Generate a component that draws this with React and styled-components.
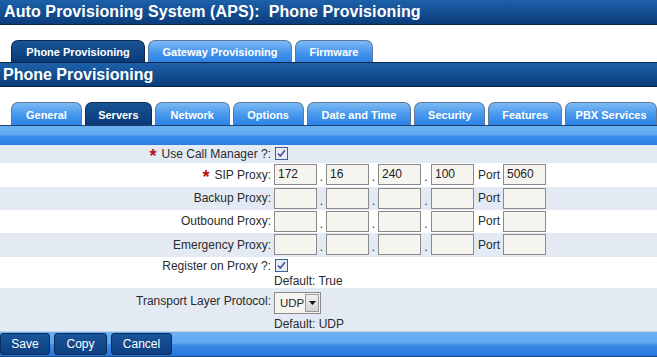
import React from 'react'
import styled, { createGlobalStyle } from 'styled-components'

const GlobalStyle = createGlobalStyle`
  body {
    margin: 0;
    background: #ffffff;
    font-family: "Liberation Sans", Arial, sans-serif;
  }
`

const Page = styled.div`
  width: 657px;
  height: 357px;
  overflow: hidden;
  display: flex;
  flex-direction: column;
`

const TitleBar = styled.div`
  height: 24px;
  border-bottom: 1px solid #0a2548;
  background: linear-gradient(#1c61aa, #0c3c7a);
  color: #ffffff;
  font-weight: bold;
  font-size: 16px;
  letter-spacing: 0.1px;
  line-height: 24px;
  padding-left: 4px;
  white-space: pre;
`

const TabStrip = styled.div`
  display: flex;
  align-items: flex-end;
  gap: 3px;
  padding-left: 11px;
  padding-top: ${(p) => p.$top}px;
  height: ${(p) => p.$height}px;
`

const Tab = styled.div`
  width: ${(p) => p.$width}px;
  height: ${(p) => p.$height}px;
  box-sizing: border-box;
  border: 1px solid ${(p) => (p.$active ? '#0a2a52' : '#5d7898')};
  border-bottom: none;
  border-radius: 7px 7px 0 0;
  background: ${(p) =>
    p.$active ? 'linear-gradient(#175496, #0b3a77)' : 'linear-gradient(#7dbaf5, #4596ec 55%, #2c83e6)'};
  color: #ffffff;
  font-weight: bold;
  font-size: 11px;
  display: flex;
  align-items: center;
  justify-content: center;
  padding-top: 1px;
  white-space: nowrap;
  overflow: hidden;
`

const SectionHeader = styled.div`
  height: 23px;
  border-top: 1px solid #0a2548;
  border-bottom: 1px solid #0a2548;
  background: linear-gradient(#1c61aa, #0c3c7a);
  color: #ffffff;
  font-weight: bold;
  font-size: 16px;
  line-height: 23px;
  padding-left: 3px;
`

const GlossBar = styled.div`
  height: ${(p) => p.$height}px;
  border-top: 1px solid #1d426e;
  background: linear-gradient(#6cb2f3 0%, #5ea8f0 48%, #3a8ce8 52%, #2a7fe2 100%);
`

const Form = styled.div`
  display: flex;
  flex-direction: column;
`

const Row = styled.div`
  display: grid;
  grid-template-columns: 271px 1fr;
  column-gap: 3px;
  height: ${(p) => p.$height}px;
  align-items: ${(p) => (p.$top ? 'start' : 'center')};
  background: ${(p) => (p.$shade ? '#e4eaf3' : '#ffffff')};
  font-size: 12px;
  color: #2b2b2b;
`

const Label = styled.div`
  text-align: right;
  white-space: nowrap;
  padding-top: ${(p) => p.$pad || 0}px;
`

const Star = styled.span`
  color: #b01818;
  font-weight: bold;
  font-size: 18px;
  line-height: 10px;
  position: relative;
  top: 4px;
  margin-right: 5px;
`

const Field = styled.div`
  display: flex;
  align-items: center;
  padding-top: ${(p) => p.$pad || 0}px;
`

const Stack = styled.div`
  display: flex;
  flex-direction: column;
  align-items: flex-start;
  gap: ${(p) => p.$gap}px;
  padding-top: ${(p) => p.$pad || 0}px;
`

const Input = styled.div`
  width: 43px;
  height: 21px;
  box-sizing: border-box;
  border: 1px solid #8a8a8a;
  background: #f5f4ef;
  font-size: 12px;
  line-height: 19px;
  padding-left: 3px;
  color: #222;
`

const Dot = styled.span`
  width: ${(p) => p.$w}px;
  text-align: center;
  font-size: 12px;
  padding-top: 5px;
`

const PortLabel = styled.span`
  padding: 0 3px 0 4px;
  font-size: 12px;
`

const Box = styled.span`
  display: block;
  width: 13px;
  height: 13px;
  margin-left: 1px;
`

const Select = styled.div`
  width: 47px;
  height: 22px;
  box-sizing: border-box;
  border: 1px solid #8a8a8a;
  background: #f5f4ef;
  display: flex;
  align-items: center;
  justify-content: space-between;
  padding: 1px;
  font-size: 11.5px;
`

const SelectText = styled.span`
  padding-left: 4px;
`

const Arrow = styled.span`
  width: 14px;
  height: 18px;
  box-sizing: border-box;
  border: 1px solid #9a9a9a;
  background: linear-gradient(#f0f0f0, #d4d4d4);
  display: flex;
  align-items: center;
  justify-content: center;
`

const Hint = styled.div`
  font-size: 12px;
  color: #2b2b2b;
`

const ButtonBar = styled.div`
  height: 25px;
  border-top: 1px solid #c4d4e6;
  background: linear-gradient(#6cb2f3 0%, #5ea8f0 45%, #3a8ce8 55%, #2577e0 100%);
  border-bottom: 1px solid #1a4a80;
  display: flex;
  gap: 4px;
  align-items: center;
`

const Button = styled.div`
  width: ${(p) => p.$width}px;
  height: 22px;
  box-sizing: border-box;
  border: 1px solid #0a2d5a;
  border-radius: 3px;
  background: linear-gradient(#1a5599, #0c3f80);
  color: #ffffff;
  font-size: 12px;
  display: flex;
  align-items: center;
  justify-content: center;
`

const CheckBox = () => (
  <Box>
    <svg width="13" height="13" viewBox="0 0 13 13">
      <rect x="0.5" y="0.5" width="12" height="12" fill="#e9ebf3" stroke="#3a6390" />
      <path d="M3 6.5 L5.3 9 L10 3.2" fill="none" stroke="#4a4fa6" strokeWidth="1.6" />
    </svg>
  </Box>
)

const IpField = ({ values = ['', '', '', ''], port = '' }) => (
  <Field>
    <Input>{values[0]}</Input>
    <Dot $w={9}>.</Dot>
    <Input>{values[1]}</Input>
    <Dot $w={9}>.</Dot>
    <Input>{values[2]}</Input>
    <Dot $w={10}>.</Dot>
    <Input>{values[3]}</Input>
    <PortLabel>Port</PortLabel>
    <Input>{port}</Input>
  </Field>
)

const topTabs = [
  { label: 'Phone Provisioning', width: 134, active: true },
  { label: 'Gateway Provisioning', width: 144 },
  { label: 'Firmware', width: 78 }
]

const subTabs = [
  { label: 'General', width: 71 },
  { label: 'Servers', width: 67, active: true },
  { label: 'Network', width: 75 },
  { label: 'Options', width: 71 },
  { label: 'Date and Time', width: 105 },
  { label: 'Security', width: 71 },
  { label: 'Features', width: 74 },
  { label: 'PBX Services', width: 92 }
]

const App = () => (
  <Page>
    <GlobalStyle />
    <TitleBar>Auto Provisioning System (APS):  Phone Provisioning</TitleBar>
    <TabStrip $top={15} $height={22}>
      {topTabs.map((t) => (
        <Tab key={t.label} $width={t.width} $height={22} $active={t.active}>
          {t.label}
        </Tab>
      ))}
    </TabStrip>
    <SectionHeader>Phone Provisioning</SectionHeader>
    <TabStrip $top={15} $height={23}>
      {subTabs.map((t) => (
        <Tab key={t.label} $width={t.width} $height={23} $active={t.active}>
          {t.label}
        </Tab>
      ))}
    </TabStrip>
    <GlossBar $height={19} />
    <Form>
      <Row $shade $height={18}>
        <Label>
          <Star>*</Star>Use Call Manager ?:
        </Label>
        <CheckBox />
      </Row>
      <Row $height={24}>
        <Label>
          <Star>*</Star>SIP Proxy:
        </Label>
        <IpField values={['172', '16', '240', '100']} port="5060" />
      </Row>
      <Row $shade $height={23}>
        <Label>Backup Proxy:</Label>
        <IpField />
      </Row>
      <Row $height={23}>
        <Label>Outbound Proxy:</Label>
        <IpField />
      </Row>
      <Row $shade $height={24}>
        <Label>Emergency Proxy:</Label>
        <IpField />
      </Row>
      <Row $top $height={31}>
        <Label $pad={2}>Register on Proxy ?:</Label>
        <Stack $gap={2} $pad={2}>
          <CheckBox />
          <Hint>Default: True</Hint>
        </Stack>
      </Row>
      <Row $shade $top $height={43}>
        <Label $pad={6}>Transport Layer Protocol:</Label>
        <Stack $gap={3} $pad={4}>
          <Select>
            <SelectText>UDP</SelectText>
            <Arrow>
              <svg width="7" height="4" viewBox="0 0 7 4">
                <path d="M0 0 H7 L3.5 4 Z" fill="#111" />
              </svg>
            </Arrow>
          </Select>
          <Hint>Default: UDP</Hint>
        </Stack>
      </Row>
    </Form>
    <ButtonBar>
      <Button $width={50}>Save</Button>
      <Button $width={53}>Copy</Button>
      <Button $width={61}>Cancel</Button>
    </ButtonBar>
  </Page>
)

export default App
